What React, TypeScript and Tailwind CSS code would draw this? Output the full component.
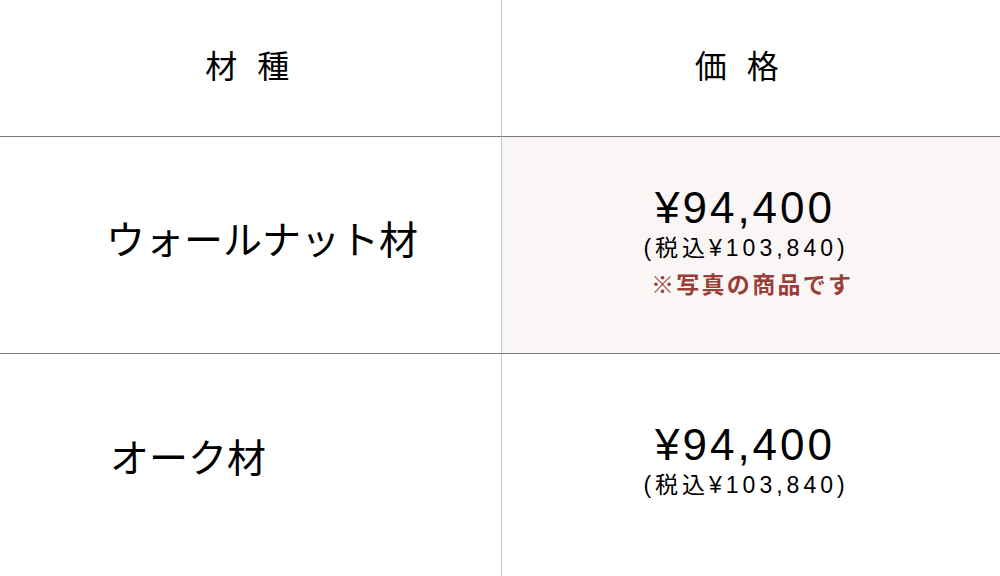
import React from "react";

const font = { fontFamily: '"Noto Sans CJK JP", "Noto Sans", sans-serif' };
const priceFont = { fontFamily: '"Liberation Sans", "Noto Sans CJK JP", sans-serif' };

function Price({ note }: { note?: boolean }) {
  return (
    <div className="flex flex-col items-center text-black" style={priceFont}>
      <div className="text-[44px] leading-[46px] tracking-[3px] pr-[12px]">¥94,400</div>
      <div className="mt-[2px] text-[23px] leading-[30px] tracking-[4px] pr-[10px]">(税込¥103,840)</div>
      {note && (
        <div
          className="mt-[5px] text-[23px] leading-[30px] font-bold tracking-[0.1em] pl-[0.1em] text-[#9a3f37]"
          style={font}
        >
          ※写真の商品です
        </div>
      )}
    </div>
  );
}

export default function App() {
  return (
    <div className="w-[1000px] h-[576px] bg-white overflow-hidden" style={font}>
      <div className="grid grid-cols-[502px_498px] grid-rows-[137px_217px_222px]">
        <div className="border-b border-r border-r-[#c8c8c8] border-b-[#7a7a7a] flex items-center justify-center pb-[8px] text-[32px] tracking-[0.2em] text-black">
          材 種
        </div>
        <div className="border-b border-b-[#7a7a7a] flex items-center justify-center pb-[8px] pr-[22px] text-[32px] tracking-[0.2em] text-black">
          価 格
        </div>
        <div className="border-b border-r border-r-[#c8c8c8] border-b-[#7a7a7a] flex items-center pl-[106px] pb-[16px] text-[39px] text-black">
          ウォールナット材
        </div>
        <div className="border-b border-b-[#7a7a7a] bg-[#faf6f6] flex items-center justify-center pb-[8px]">
          <Price note />
        </div>
        <div className="border-r border-r-[#c8c8c8] flex items-center pl-[110px] pb-[20px] text-[39px] text-black">
          オーク材
        </div>
        <div className="flex items-center justify-center pb-[8px]">
          <Price />
        </div>
      </div>
    </div>
  );
}
